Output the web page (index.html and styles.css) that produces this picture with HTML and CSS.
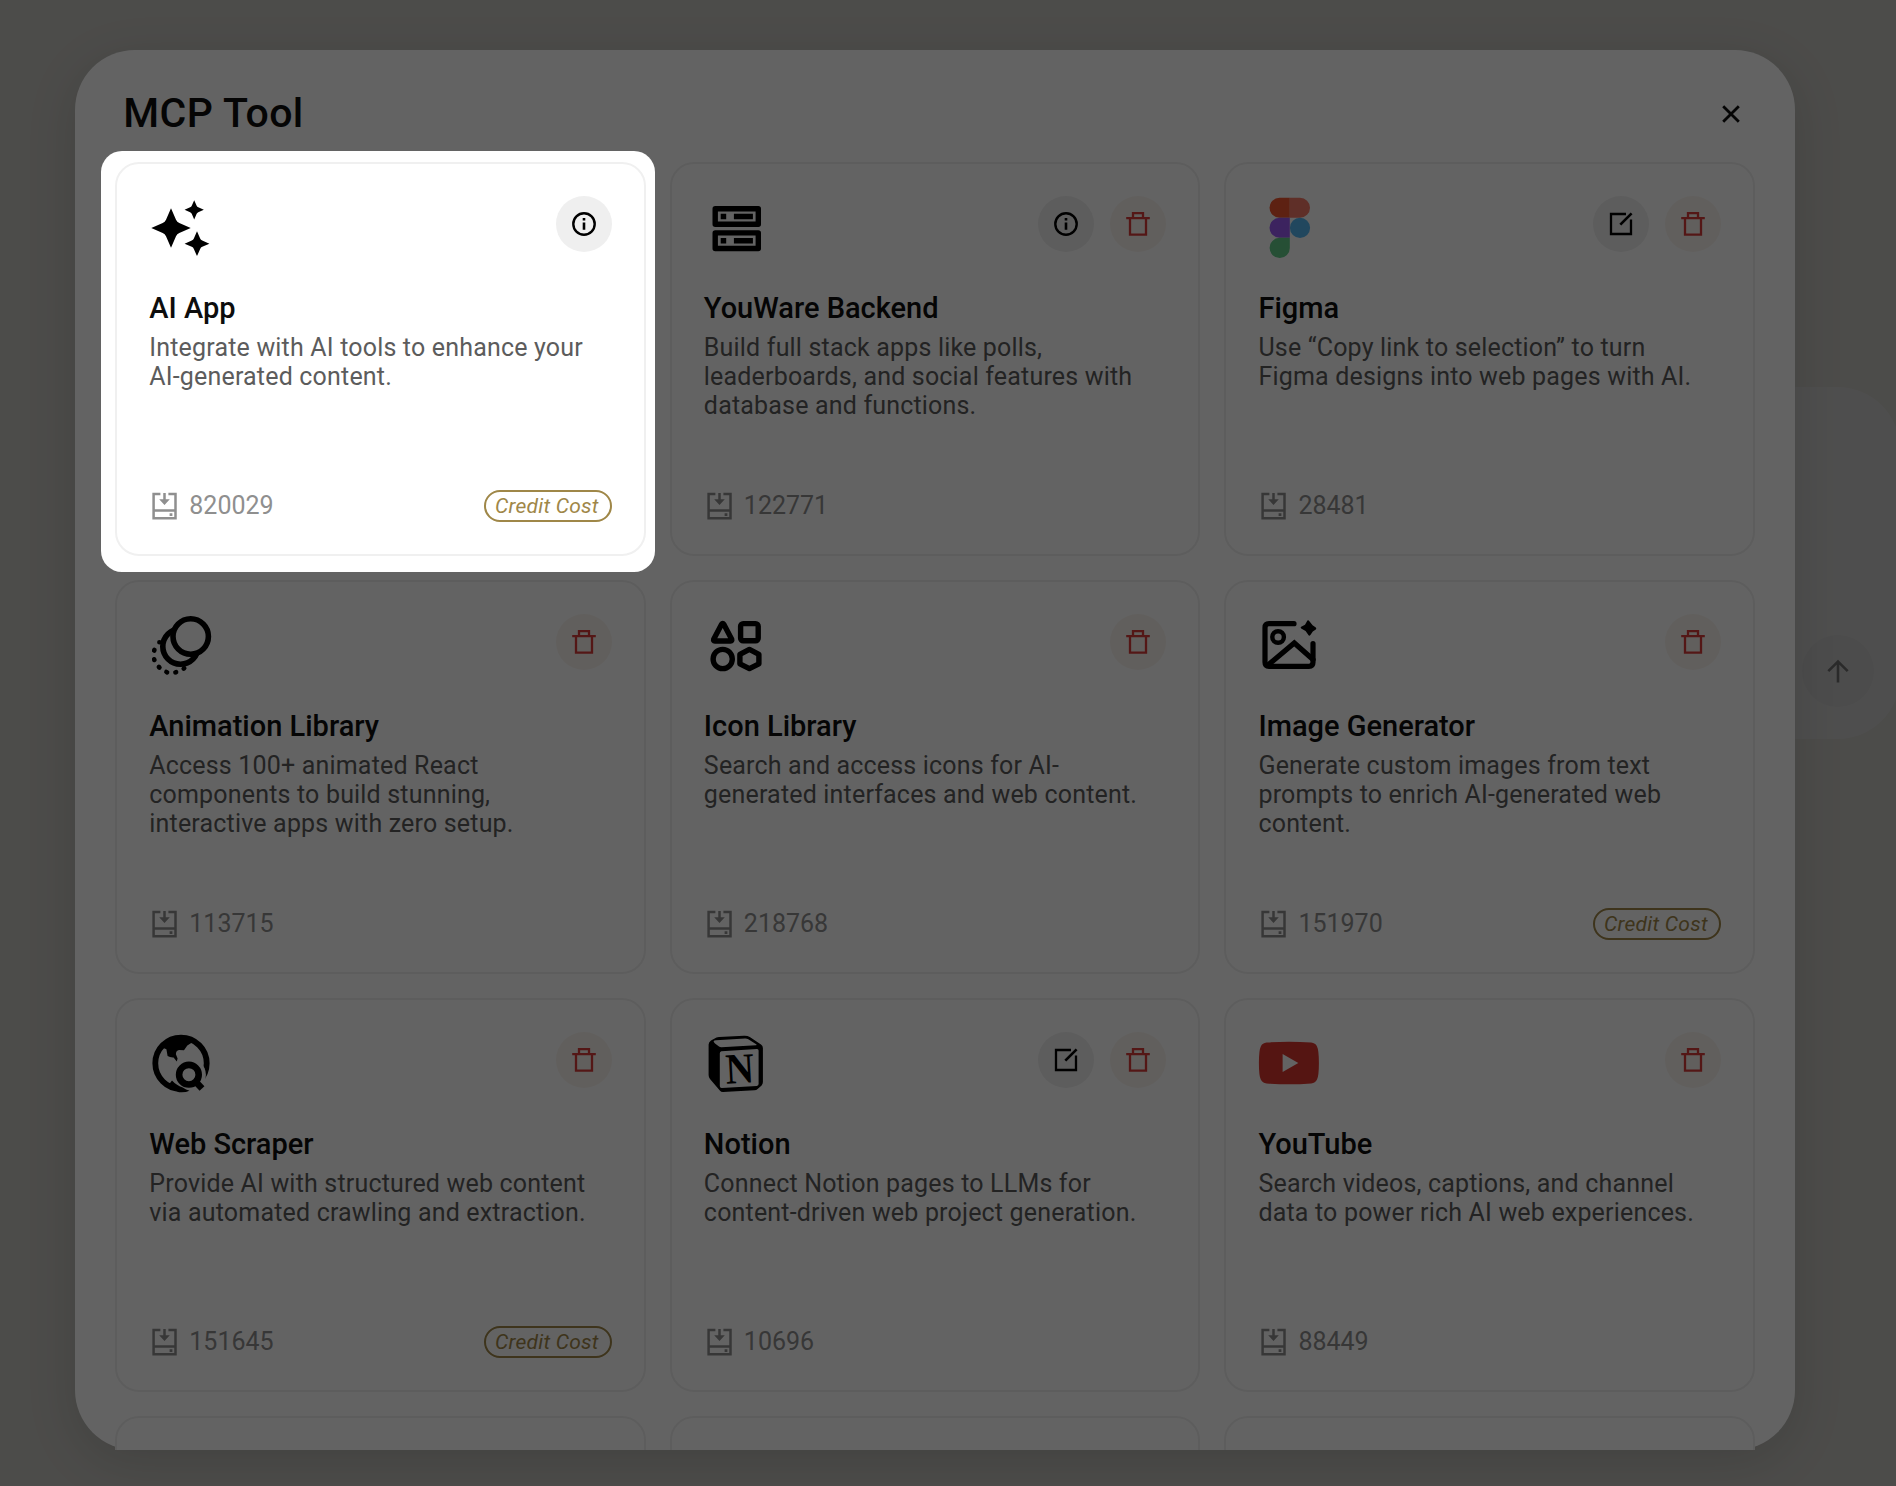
FILE: index.html
```html
<!DOCTYPE html>
<html lang="en">
<head>
<meta charset="utf-8">
<title>MCP Tool</title>
<link rel="stylesheet" href="styles.css">
</head>
<body>
<svg class="sprite" aria-hidden="true">
  <symbol id="i-info" viewBox="0 0 28 28"><circle cx="14" cy="14" r="10.7" fill="none" stroke="currentColor" stroke-width="2.4"/><path d="M12.7 8h2.6v2.6h-2.6zM12.7 12.4h2.6v7.4h-2.6z" fill="currentColor"/></symbol>
  <symbol id="i-edit" viewBox="0 0 28 28"><path d="M19 4H4V24H24V9.5" fill="none" stroke="currentColor" stroke-width="2.3"/><path d="M13.3 14.7L24.6 3.4" stroke="currentColor" stroke-width="2.6"/></symbol>
  <symbol id="i-trash" viewBox="0 0 28 28"><path d="M2.2 8.2H25.8M6 8.2V24.6H22V8.2M9 8V3.2H19V8" fill="none" stroke="currentColor" stroke-width="2.3"/></symbol>
  <symbol id="i-installs" viewBox="0 0 30 30"><path d="M11.4 3H4.6V27.2H26.5V3H19.4M4.6 19.6H26.5M15.5 1.9V10" fill="none" stroke="currentColor" stroke-width="2.5"/><path d="M10.2 8.2L15.5 14 20.8 8.2zM20.6 22.2h2.8V25h-2.8z" fill="currentColor"/></symbol>
</svg>

<div class="stage">
  <div class="composer">
    <button class="send" aria-label="Send"><svg width="28" height="28" viewBox="0 0 28 28"><path d="M14 25.4V4.6M4.3 14.2L14 4.5 23.7 14.2" fill="none" stroke="currentColor" stroke-width="2.6"/></svg></button>
  </div>

  <main class="modal">
    <header class="modal-head">
      <h1>MCP Tool</h1>
      <button class="close" aria-label="Close"><svg width="20" height="20" viewBox="0 0 20 20"><path d="M2.2 2.2L17.8 17.8M17.8 2.2L2.2 17.8" stroke="currentColor" stroke-width="2.8"/></svg></button>
    </header>

    <section class="grid">
      <article class="card">
        <div class="card-top">
          <svg class="logo" viewBox="0 0 62 62">
            <defs><path id="star" d="M0-19.7L5-8.3Q6-6 8.3-5L19.7 0 8.3 5Q6 6 5 8.3L0 19.7-5 8.3Q-6 6-8.3 5L-19.7 0-8.3-5Q-6-6-5-8.3z"/></defs>
            <use href="#star" transform="translate(22 32)"/><use href="#star" transform="translate(45.2 13.8) scale(.49)"/><use href="#star" transform="translate(48 47.7) scale(.63)"/>
          </svg>
          <div class="actions"><button class="act"><svg><use href="#i-info"/></svg></button></div>
        </div>
        <h2>AI App</h2>
        <p>Integrate with AI tools to enhance your AI-generated content.</p>
        <footer><span class="count"><svg><use href="#i-installs"/></svg>820029</span><span class="badge">Credit Cost</span></footer>
      </article>

      <article class="card">
        <div class="card-top">
          <svg class="logo" viewBox="0 0 62 62">
            <g fill="none" stroke="#000" stroke-width="5.4" stroke-linejoin="round"><rect x="11.2" y="12.7" width="43.1" height="15.6"/><rect x="11.2" y="36.9" width="43.1" height="15.6"/></g>
            <path d="M16.7 17.7h5.5v5.6h-5.5zM29.9 17.7h19v5.6h-19zM16.7 41.9h5.5v5.6h-5.5zM29.9 41.9h19v5.6h-19z"/>
          </svg>
          <div class="actions"><button class="act"><svg><use href="#i-info"/></svg></button><button class="act danger"><svg><use href="#i-trash"/></svg></button></div>
        </div>
        <h2>YouWare Backend</h2>
        <p>Build full stack apps like polls, leaderboards, and social features with database and functions.</p>
        <footer><span class="count"><svg><use href="#i-installs"/></svg>122771</span></footer>
      </article>

      <article class="card">
        <div class="card-top">
          <svg class="logo" viewBox="0 0 62 62">
            <path fill="#f0562f" d="M31.8 1.8V21.8H21.5a10 10 0 0 1 0-20z"/><path fill="#f47a68" d="M31.8 1.8H42a10 10 0 0 1 0 20H31.8z"/><path fill="#9c5cf5" d="M31.8 21.8V41.8H21.5a10 10 0 0 1 0-20z"/><circle fill="#57b8f3" cx="42" cy="31.8" r="10.1"/><path fill="#62cb88" d="M31.8 41.8V51.8a10.1 10.1 0 1 1-10.3-10z"/>
          </svg>
          <div class="actions"><button class="act"><svg><use href="#i-edit"/></svg></button><button class="act danger"><svg><use href="#i-trash"/></svg></button></div>
        </div>
        <h2>Figma</h2>
        <p>Use “Copy link to selection” to turn Figma designs into web pages with AI.</p>
        <footer><span class="count"><svg><use href="#i-installs"/></svg>28481</span></footer>
      </article>

      <article class="card">
        <div class="card-top">
          <svg class="logo" viewBox="0 0 62 62">
            <defs><mask id="m-ring"><rect width="62" height="62" fill="#fff"/><circle cx="41.7" cy="22.5" r="18" fill="#000"/></mask></defs>
            <g fill="none" stroke="#000" stroke-width="5.6"><circle cx="41.7" cy="22.5" r="17.7"/><circle cx="31.5" cy="32.5" r="17.7" mask="url(#m-ring)"/></g>
            <g fill="none" stroke="#000" stroke-width="4.6" stroke-linecap="round"><path d="M10.4 28.3h.1M5.4 35.9l-.2.7M5.2 45.3l.2.7M9.9 53l.5.5M17.4 58l.7.3M26.4 58.4l.7-.2M34.7 54.6l.5-.5"/></g>
          </svg>
          <div class="actions"><button class="act danger"><svg><use href="#i-trash"/></svg></button></div>
        </div>
        <h2>Animation Library</h2>
        <p>Access 100+ animated React components to build stunning, interactive apps with zero setup.</p>
        <footer><span class="count"><svg><use href="#i-installs"/></svg>113715</span></footer>
      </article>

      <article class="card">
        <div class="card-top">
          <svg class="logo" viewBox="0 0 62 62">
            <g fill="none" stroke="#000" stroke-width="5.4" stroke-linejoin="round"><path d="M17.6 10.2Q18.7 8.6 19.8 10.2L27.7 25.2Q28.2 27 26.6 27H10.8Q9.2 27 9.7 25.2z"/><rect x="36.6" y="9.6" width="17.6" height="17.2" rx="2.6"/><circle cx="18.7" cy="45" r="9.6"/><path d="M45.4 35.4L54.9 40.4V49.8L45.4 54.6 35.9 49.8V40.4z"/></g>
          </svg>
          <div class="actions"><button class="act danger"><svg><use href="#i-trash"/></svg></button></div>
        </div>
        <h2>Icon Library</h2>
        <p>Search and access icons for AI-generated interfaces and web content.</p>
        <footer><span class="count"><svg><use href="#i-installs"/></svg>218768</span></footer>
      </article>

      <article class="card">
        <div class="card-top">
          <svg class="logo" viewBox="0 0 62 62">
            <g fill="none" stroke="#000" stroke-width="5.2" stroke-linecap="round" stroke-linejoin="round"><path d="M36 9.7H11Q7 9.7 7 13.7V48.3Q7 52.3 11 52.3H51Q55 52.3 55 48.3V29.5"/><circle cx="20.1" cy="23" r="5.8" stroke-width="4.4"/><path d="M10 51L36.3 29 55 45.5" stroke-linejoin="miter"/></g>
            <path d="M50 6.2Q50.8 6.2 51.4 7.2L54.6 11.2 57.8 13.6Q58.8 14.6 57.8 15.6L54.8 17.6 52.4 21Q51.2 22.4 50.4 21L47.6 17 43.2 14.6Q42 13.6 43.2 12.8L47 10.8 49 7.2Q49.4 6.2 50 6.2z"/>
          </svg>
          <div class="actions"><button class="act danger"><svg><use href="#i-trash"/></svg></button></div>
        </div>
        <h2>Image Generator</h2>
        <p>Generate custom images from text prompts to enrich AI-generated web content.</p>
        <footer><span class="count"><svg><use href="#i-installs"/></svg>151970</span><span class="badge">Credit Cost</span></footer>
      </article>

      <article class="card">
        <div class="card-top">
          <svg class="logo" viewBox="0 0 62 62">
            <defs><mask id="m-globe"><rect width="62" height="62" fill="#fff"/><circle cx="39.9" cy="42.7" r="17" fill="#000"/><path d="M44 47L60 63" stroke="#000" stroke-width="15"/></mask></defs>
            <g mask="url(#m-globe)"><circle cx="32" cy="31.3" r="25.7" fill="none" stroke="#000" stroke-width="5.8"/><path d="M12 15L17.4 17.2 18.6 24Q21 25.6 24.6 25.4L27.8 29.6 28.6 26.6 26.9 22.3Q27 18.5 30 18L35 18.3 38.3 13.6 42.6 10.8 46 10 32 4z"/></g>
            <path d="M33.8 55.5Q27 53 23 48.5L18 55 30 60.2Q36 60.8 40.5 58.8 37 57.8 33.8 55.5z"/>
            <circle cx="39.9" cy="42.7" r="9.8" fill="none" stroke="#000" stroke-width="6.6"/><path d="M46 49L53 56.5" stroke="#000" stroke-width="6.6"/>
          </svg>
          <div class="actions"><button class="act danger"><svg><use href="#i-trash"/></svg></button></div>
        </div>
        <h2>Web Scraper</h2>
        <p>Provide AI with structured web content via automated crawling and extraction.</p>
        <footer><span class="count"><svg><use href="#i-installs"/></svg>151645</span><span class="badge">Credit Cost</span></footer>
      </article>

      <article class="card">
        <div class="card-top">
          <svg class="logo" viewBox="0 0 62 62">
            <path fill-rule="evenodd" d="M4.6 12.5Q4.8 10 7 8.6L12.5 5.6Q13.6 5.1 15 5L40 3.7Q43.4 3.5 45.8 5L57 12.6Q58.9 13.8 58.9 16V50Q58.9 52 57.6 53.4L53.6 57Q52.4 58.2 50.4 58.3L19 60.1Q17 60.1 15.8 58.6L6 47Q4.6 45.2 4.6 43zM9.6 9.3Q9.6 10.4 11 11.4L15 14.6Q16 15.4 17.6 15.3L52 13.3Q53.4 13 52.2 12.2L44.3 7.2Q43 6.4 41 6.5L12 8.2Q10 8.3 9.6 9.3zM15.8 21.6V54Q15.8 56 17.8 55.9L52.8 53.9Q54.6 53.8 54.6 52V18.6Q54.6 16.9 52.9 17L17.4 19.2Q15.8 19.4 15.8 21.6z"/>
            <text class="notion-n" x="21.6" y="51.2" textLength="28.5" lengthAdjust="spacingAndGlyphs" transform="rotate(-3 35 38)">N</text>
          </svg>
          <div class="actions"><button class="act"><svg><use href="#i-edit"/></svg></button><button class="act danger"><svg><use href="#i-trash"/></svg></button></div>
        </div>
        <h2>Notion</h2>
        <p>Connect Notion pages to LLMs for content-driven web project generation.</p>
        <footer><span class="count"><svg><use href="#i-installs"/></svg>10696</span></footer>
      </article>

      <article class="card">
        <div class="card-top">
          <svg class="logo" viewBox="0 0 62 62">
            <path fill="#dc372f" d="M8.6 10.6Q31 8.8 53.2 10.6 57.4 11 59 14.4 60.9 18 60.9 31T59 47.6Q57.4 51 53.2 51.5 31 53.2 8.6 51.5 4.4 51 2.8 47.6.9 44 .9 31T2.8 14.4Q4.4 11 8.6 10.6z"/><path fill="#fff" d="M24.6 21.9L40.3 31 24.6 40.1z"/>
          </svg>
          <div class="actions"><button class="act danger"><svg><use href="#i-trash"/></svg></button></div>
        </div>
        <h2>YouTube</h2>
        <p>Search videos, captions, and channel data to power rich AI web experiences.</p>
        <footer><span class="count"><svg><use href="#i-installs"/></svg>88449</span></footer>
      </article>

      <article class="card"></article>
      <article class="card"></article>
      <article class="card"></article>
    </section>
  </main>

  <div class="spotlight"></div>
</div>
</body>
</html>
```
FILE: styles.css
```css
* { box-sizing: border-box; }

body {
  margin: 0;
  font-family: Roboto, "Liberation Sans", sans-serif;
  color: #0d0d0d;
}

button {
  border: 0;
  padding: 0;
  font: inherit;
  color: inherit;
}

.sprite { position: absolute; width: 0; height: 0; }

.stage {
  position: relative;
  height: 1486px;
  padding: 50px 0 0 75px;
  overflow: hidden;
  background: #c4c3be;
}

/* Prompt box that sits behind the dialog */
.composer {
  position: absolute;
  top: 387px;
  right: -4px;
  width: 400px;
  height: 352px;
  padding: 0 26px 32px 0;
  display: flex;
  align-items: flex-end;
  justify-content: flex-end;
  border-radius: 62px;
  background: #cacac9;
}

.send {
  width: 72px;
  height: 72px;
  display: grid;
  place-items: center;
  border-radius: 50%;
  background: #c4c4c4;
  color: #6e6e6e;
}

.modal {
  position: relative;
  width: 1720px;
  height: 1400px;
  padding: 39px 40px 0 40.3px;
  border-radius: 60px;
  background: #fff;
  box-shadow: 0 12px 50px rgba(0, 0, 0, .13);
}

.modal-head {
  height: 48px;
  margin-bottom: 25px;
  padding: 0 13px 0 8px;
  display: flex;
  align-items: center;
  justify-content: space-between;
}

h1 {
  margin: 0;
  font-size: 41px;
  line-height: 48px;
  font-weight: 500;
  letter-spacing: .4px;
}

.close {
  width: 22px;
  height: 22px;
  margin-top: 2px;
  display: grid;
  place-items: center;
  background: none;
}

.grid {
  height: 1288px;
  display: grid;
  grid-template-columns: repeat(3, 1fr);
  grid-auto-rows: 394px;
  gap: 24px;
  overflow: hidden;
}

.card {
  display: flex;
  flex-direction: column;
  padding: 32px;
  border: 2px solid #f0f0f0;
  border-radius: 24px;
  background: #fff;
}

.card-top {
  display: flex;
  align-items: flex-start;
  justify-content: space-between;
  margin-bottom: 32px;
}

.logo { width: 62px; height: 62px; overflow: visible; }

.notion-n {
  font: bold 43px "Liberation Serif", serif;
}

.actions { display: flex; gap: 16px; }

.act {
  width: 56px;
  height: 56px;
  display: grid;
  place-items: center;
  border-radius: 50%;
  background: #efefef;
  color: #000;
}

.act svg { width: 28px; height: 28px; }

.danger {
  background: #faf5f0;
  color: #d93c3a;
}

h2 {
  margin: 0 0 7px;
  font-size: 29px;
  line-height: 36px;
  font-weight: 500;
}

p {
  margin: 0;
  padding-right: 16px;
  font-size: 25px;
  line-height: 29px;
  letter-spacing: .18px;
  color: #5c5c5c;
}

footer {
  height: 32px;
  margin-top: auto;
  display: flex;
  align-items: center;
  justify-content: space-between;
}

.count {
  display: flex;
  align-items: center;
  gap: 10px;
  padding-bottom: 1px;
  font-size: 25px;
  line-height: 28px;
  color: #8f8f8f;
}

.count svg { width: 30px; height: 30px; margin-bottom: -1px; }

.badge {
  width: 128px;
  height: 32px;
  padding-right: 2px;
  border: 2px solid #9f8748;
  border-radius: 16px;
  font-size: 21px;
  line-height: 28px;
  letter-spacing: .25px;
  font-style: italic;
  text-align: center;
  white-space: nowrap;
  color: #9f8748;
}

/* Tour highlight: everything outside this box is dimmed */
.spotlight {
  position: absolute;
  top: 151px;
  left: 100.6px;
  width: 554px;
  height: 421px;
  border-radius: 21px;
  box-shadow: 0 0 0 2400px rgba(0, 0, 0, .61);
  pointer-events: none;
}
```
